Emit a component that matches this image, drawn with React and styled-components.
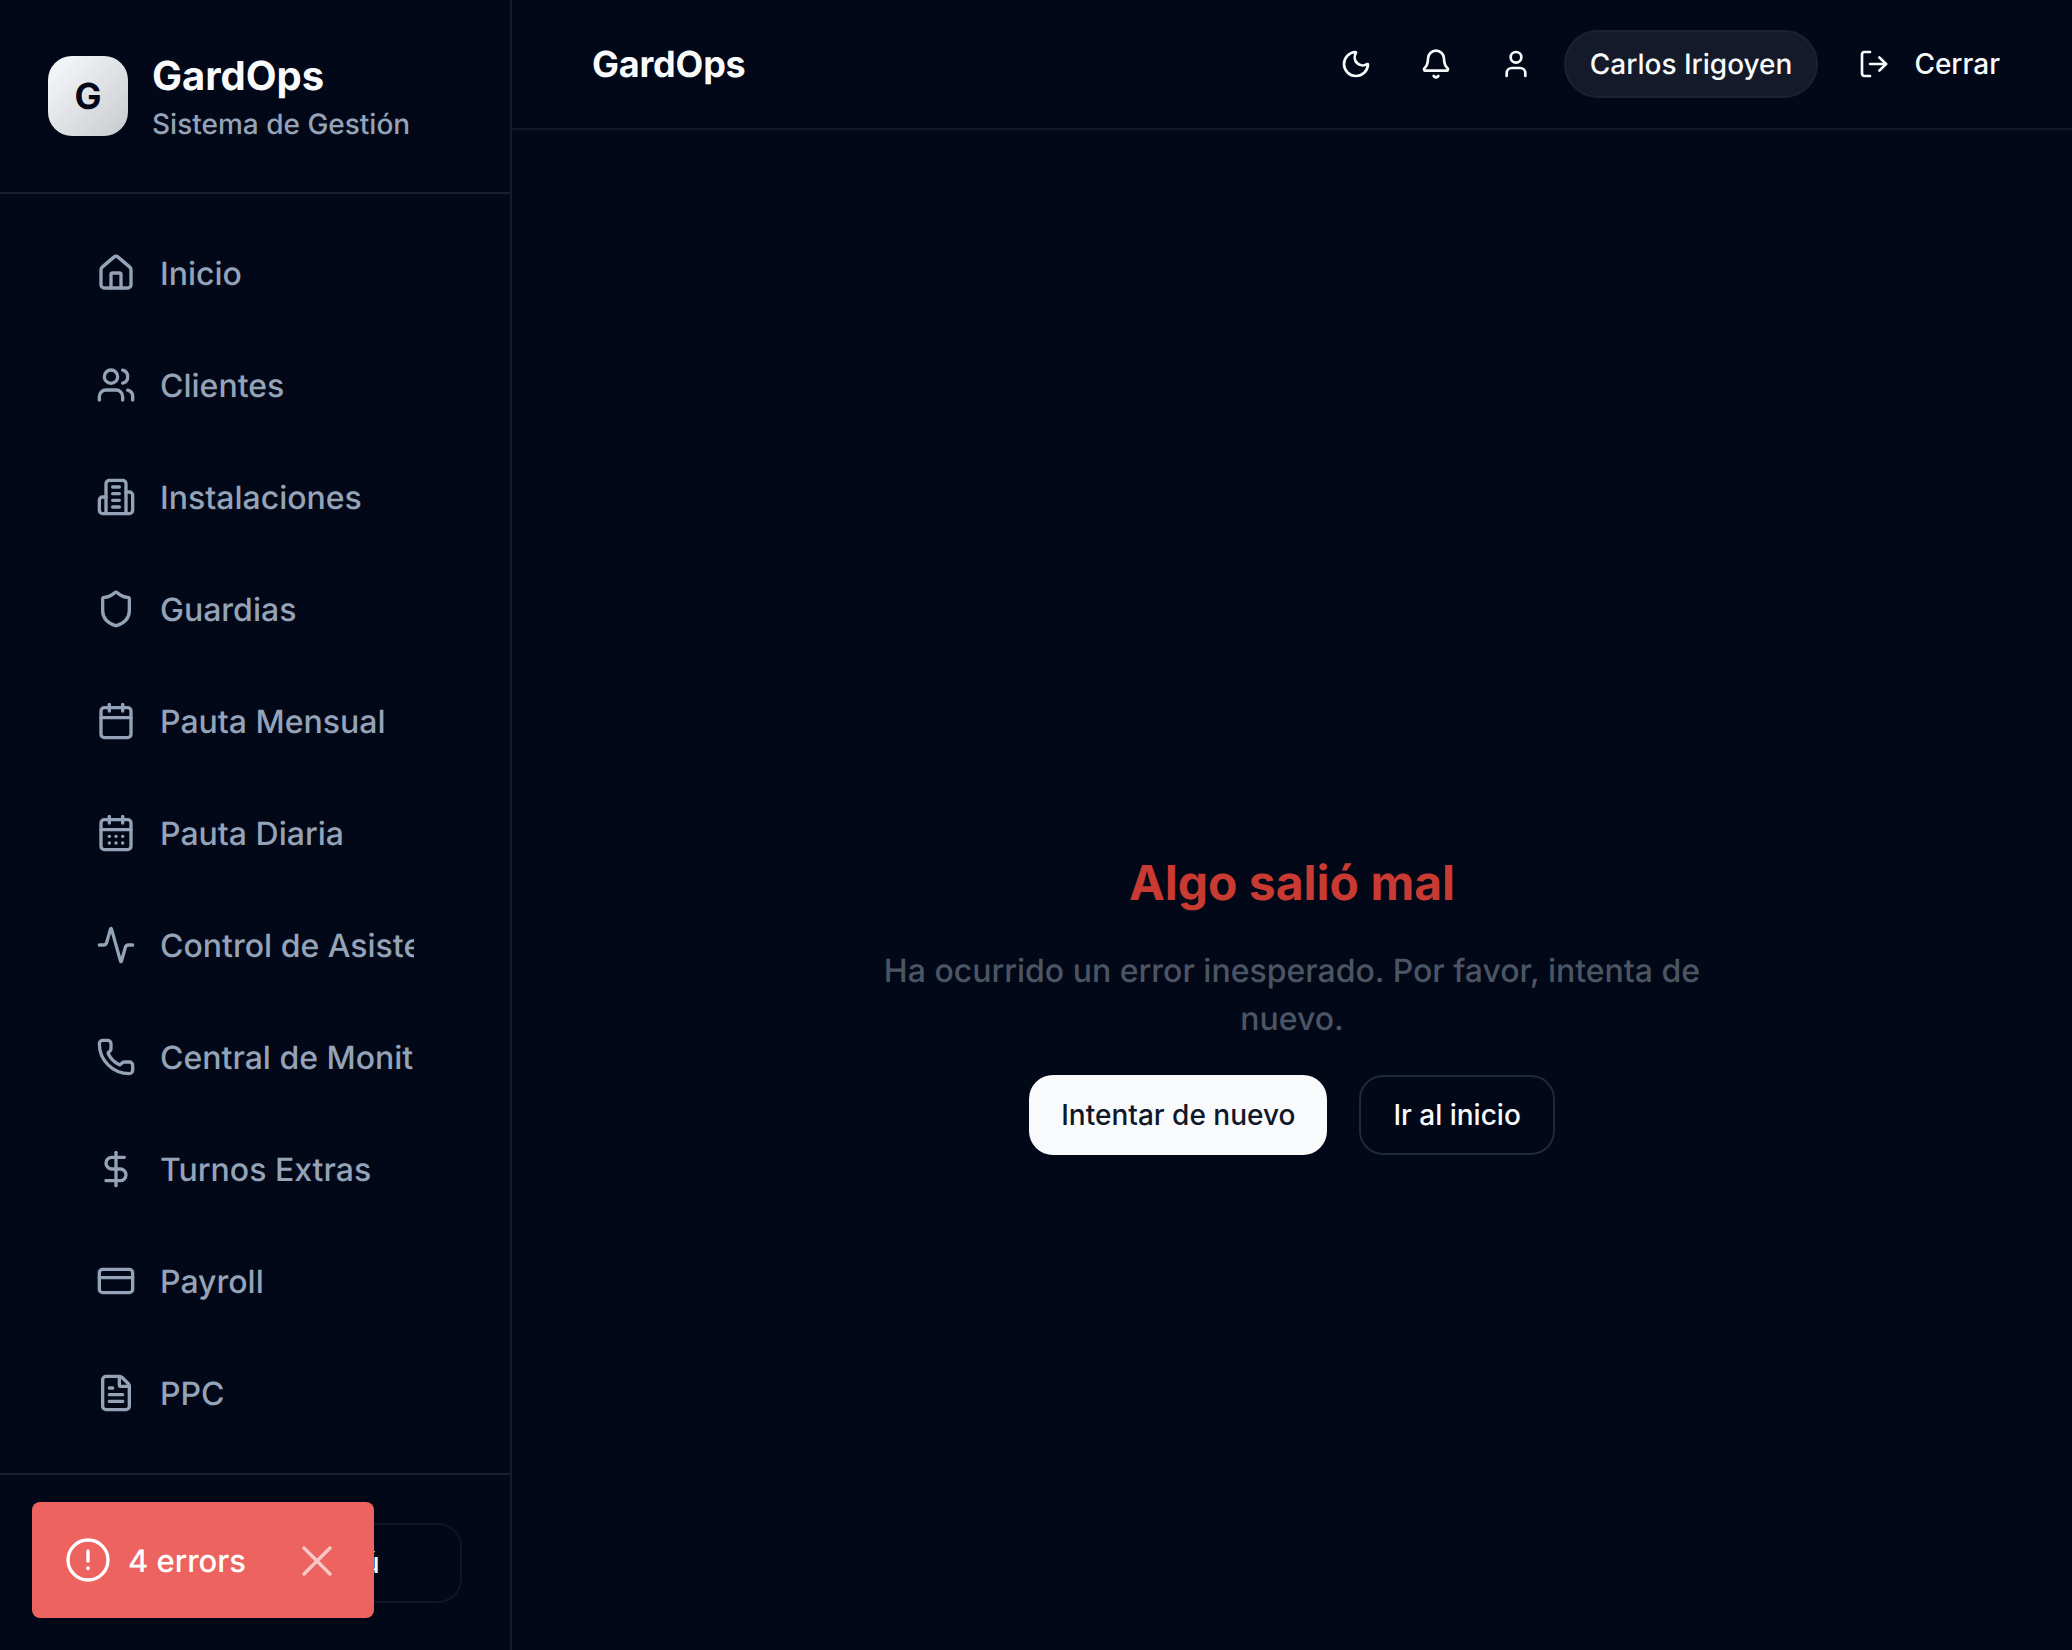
import React from "react";
import styled, { createGlobalStyle } from "styled-components";
import {
  Activity,
  Bell,
  Calendar,
  CalendarDays,
  CreditCard,
  DollarSign,
  FileText,
  House,
  LogOut,
  Moon,
  Phone,
  Shield,
  User,
  Users,
} from "lucide-react";

const GlobalStyle = createGlobalStyle`
  html, body {
    margin: 0;
    padding: 0;
    background: #020817;
  }
  * {
    box-sizing: border-box;
  }
  body {
    font-family: Inter, "Liberation Sans", sans-serif;
    text-rendering: geometricPrecision;
    -webkit-font-smoothing: antialiased;
  }
`;

const Page = styled.div`
  display: flex;
  width: 2072px;
  height: 1650px;
  overflow: hidden;
  background: #020817;
  color: #f8fafc;
`;

const Sidebar = styled.aside`
  display: flex;
  flex-direction: column;
  width: 512px;
  height: 100%;
  flex-shrink: 0;
  border-right: 2px solid #131b2c;
`;

const Brand = styled.div`
  display: flex;
  align-items: center;
  gap: 24px;
  height: 194px;
  padding: 0 48px;
  border-bottom: 2px solid #172032;
`;

const LogoBox = styled.div`
  display: flex;
  align-items: center;
  justify-content: center;
  width: 80px;
  height: 80px;
  border-radius: 24px;
  background: linear-gradient(135deg, #f8fafc, #c8cacf);
  color: #020817;
  font-size: 36px;
  font-weight: 700;
`;

const BrandText = styled.div`
  display: flex;
  flex-direction: column;
  gap: 4px;
  padding-top: 4px;
`;

const BrandName = styled.div`
  font-size: 40px;
  line-height: 48px;
  font-weight: 700;
`;

const BrandSub = styled.div`
  font-size: 28px;
  line-height: 40px;
  font-weight: 500;
  color: #94a3b8;
`;

const Nav = styled.nav`
  display: flex;
  flex-direction: column;
  flex: 1;
  padding: 23px 96px 0 48px;
  overflow: hidden;
`;

const NavItem = styled.a`
  display: flex;
  align-items: center;
  gap: 24px;
  height: 112px;
  flex-shrink: 0;
  padding-left: 48px;
  color: #94a3b8;
  font-size: 32px;
  font-weight: 500;
  white-space: nowrap;
  overflow: hidden;
  svg {
    flex-shrink: 0;
    width: 40px;
    height: 40px;
    stroke-width: 2;
  }
`;

const NavFooter = styled.div`
  flex-shrink: 0;
  height: 177px;
  padding: 48px;
  border-top: 2px solid #172032;
`;

const FooterButton = styled.button`
  display: block;
  width: 100%;
  height: 80px;
  padding: 0 0 0 254px;
  border: 2px solid #0f1624;
  border-radius: 24px;
  background: transparent;
  color: #f8fafc;
  font-family: inherit;
  font-size: 28px;
  font-weight: 500;
  text-align: left;
`;

const Toast = styled.div`
  position: fixed;
  left: 32px;
  top: 1502px;
  display: flex;
  align-items: center;
  width: 342px;
  height: 116px;
  padding: 0 42px 0 34px;
  border-radius: 8px;
  background: #ec6360;
  color: #fff;
  font-size: 31px;
  font-weight: 500;
`;

const ToastLabel = styled.span`
  flex: 1;
  margin: 2px 0 0 18px;
`;

const ToastClose = styled.span`
  display: flex;
  margin-top: 2px;
  color: #ffffff;
  opacity: 0.65;
`;

const Main = styled.main`
  display: flex;
  flex-direction: column;
  flex: 1;
  min-width: 0;
`;

const TopBar = styled.header`
  display: flex;
  align-items: center;
  height: 130px;
  padding: 0 48px 0 80px;
  border-bottom: 2px solid #111827;
`;

const TopTitle = styled.div`
  flex: 1;
  font-size: 36px;
  font-weight: 700;
  letter-spacing: -0.2px;
`;

const TopActions = styled.div`
  display: flex;
  align-items: center;
  gap: 16px;
`;

const IconButton = styled.button`
  display: flex;
  align-items: center;
  justify-content: center;
  width: 64px;
  height: 64px;
  padding: 0;
  border: none;
  background: transparent;
  color: #f8fafc;
  svg {
    width: 32px;
    height: 32px;
  }
`;

const UserPill = styled.div`
  display: flex;
  align-items: center;
  height: 68px;
  padding: 0 24px;
  border: 2px solid #1b2232;
  border-radius: 34px;
  background: #141a29;
  font-size: 28px;
  font-weight: 500;
`;

const LogoutButton = styled.button`
  display: flex;
  align-items: center;
  gap: 24px;
  height: 64px;
  padding: 0 24px;
  border: none;
  background: transparent;
  color: #f8fafc;
  font-family: inherit;
  font-size: 28px;
  font-weight: 500;
  svg {
    width: 32px;
    height: 32px;
  }
`;

const Content = styled.div`
  display: flex;
  flex-direction: column;
  align-items: center;
  flex: 1;
  padding-top: 723px;
`;

const ErrorTitle = styled.h1`
  margin: 0 0 34px;
  font-size: 48px;
  line-height: 60px;
  font-weight: 700;
  color: #c93a32;
  text-align: center;
`;

const ErrorText = styled.p`
  width: 840px;
  margin: 0 0 32px;
  font-size: 32px;
  line-height: 48px;
  font-weight: 500;
  color: #4b5563;
  text-align: center;
`;

const ButtonRow = styled.div`
  display: flex;
  gap: 32px;
`;

const PrimaryButton = styled.button`
  height: 80px;
  padding: 0 32px;
  border: none;
  border-radius: 24px;
  background: #f8fafc;
  color: #0f172a;
  font-family: inherit;
  font-size: 28px;
  font-weight: 500;
`;

const GhostButton = styled.button`
  height: 80px;
  padding: 0 32px;
  border: 2px solid #1e293b;
  border-radius: 24px;
  background: transparent;
  color: #f8fafc;
  font-family: inherit;
  font-size: 28px;
  font-weight: 500;
`;

// older lucide building-2 shape, the installed one has a door
const BuildingIcon = () => (
  <svg viewBox="0 0 24 24" fill="none" stroke="currentColor" strokeWidth="2" strokeLinecap="round" strokeLinejoin="round">
    <path d="M6 22V4a2 2 0 0 1 2-2h8a2 2 0 0 1 2 2v18Z" />
    <path d="M6 12H4a2 2 0 0 0-2 2v6a2 2 0 0 0 2 2h2" />
    <path d="M18 9h2a2 2 0 0 1 2 2v9a2 2 0 0 1-2 2h-2" />
    <path d="M10 6h4" />
    <path d="M10 10h4" />
    <path d="M10 14h4" />
    <path d="M10 18h4" />
  </svg>
);

const AlertIcon = () => (
  <svg width="44" height="44" viewBox="0 0 44 44" fill="none" stroke="currentColor" strokeWidth="3.4" strokeLinecap="round">
    <circle cx="22" cy="22" r="20" />
    <path d="M22 13v10" />
    <path d="M22 30v.5" />
  </svg>
);

const CloseIcon = () => (
  <svg width="30" height="30" viewBox="0 0 30 30" fill="none" stroke="currentColor" strokeWidth="3.4" strokeLinecap="round">
    <path d="M2 2l26 26" />
    <path d="M28 2L2 28" />
  </svg>
);

const navItems = [
  { icon: House, label: "Inicio" },
  { icon: Users, label: "Clientes" },
  { icon: BuildingIcon, label: "Instalaciones" },
  { icon: Shield, label: "Guardias" },
  { icon: Calendar, label: "Pauta Mensual" },
  { icon: CalendarDays, label: "Pauta Diaria" },
  { icon: Activity, label: "Control de Asistencias" },
  { icon: Phone, label: "Central de Monitoreo" },
  { icon: DollarSign, label: "Turnos Extras" },
  { icon: CreditCard, label: "Payroll" },
  { icon: FileText, label: "PPC" },
];

export default function App() {
  return (
    <Page>
      <GlobalStyle />
      <Sidebar>
        <Brand>
          <LogoBox>G</LogoBox>
          <BrandText>
            <BrandName>GardOps</BrandName>
            <BrandSub>Sistema de Gestión</BrandSub>
          </BrandText>
        </Brand>
        <Nav>
          {navItems.map(({ icon: Icon, label }) => (
            <NavItem key={label}>
              <Icon />
              {label}
            </NavItem>
          ))}
        </Nav>
        <NavFooter>
          <FooterButton>Menú</FooterButton>
        </NavFooter>
      </Sidebar>
      <Main>
        <TopBar>
          <TopTitle>GardOps</TopTitle>
          <TopActions>
            <IconButton>
              <Moon />
            </IconButton>
            <IconButton>
              <Bell />
            </IconButton>
            <IconButton>
              <User />
            </IconButton>
            <UserPill>Carlos Irigoyen</UserPill>
            <LogoutButton>
              <LogOut />
              Cerrar
            </LogoutButton>
          </TopActions>
        </TopBar>
        <Content>
          <ErrorTitle>Algo salió mal</ErrorTitle>
          <ErrorText>Ha ocurrido un error inesperado. Por favor, intenta de nuevo.</ErrorText>
          <ButtonRow>
            <PrimaryButton>Intentar de nuevo</PrimaryButton>
            <GhostButton>Ir al inicio</GhostButton>
          </ButtonRow>
        </Content>
      </Main>
      <Toast>
        <AlertIcon />
        <ToastLabel>4 errors</ToastLabel>
        <ToastClose>
          <CloseIcon />
        </ToastClose>
      </Toast>
    </Page>
  );
}
